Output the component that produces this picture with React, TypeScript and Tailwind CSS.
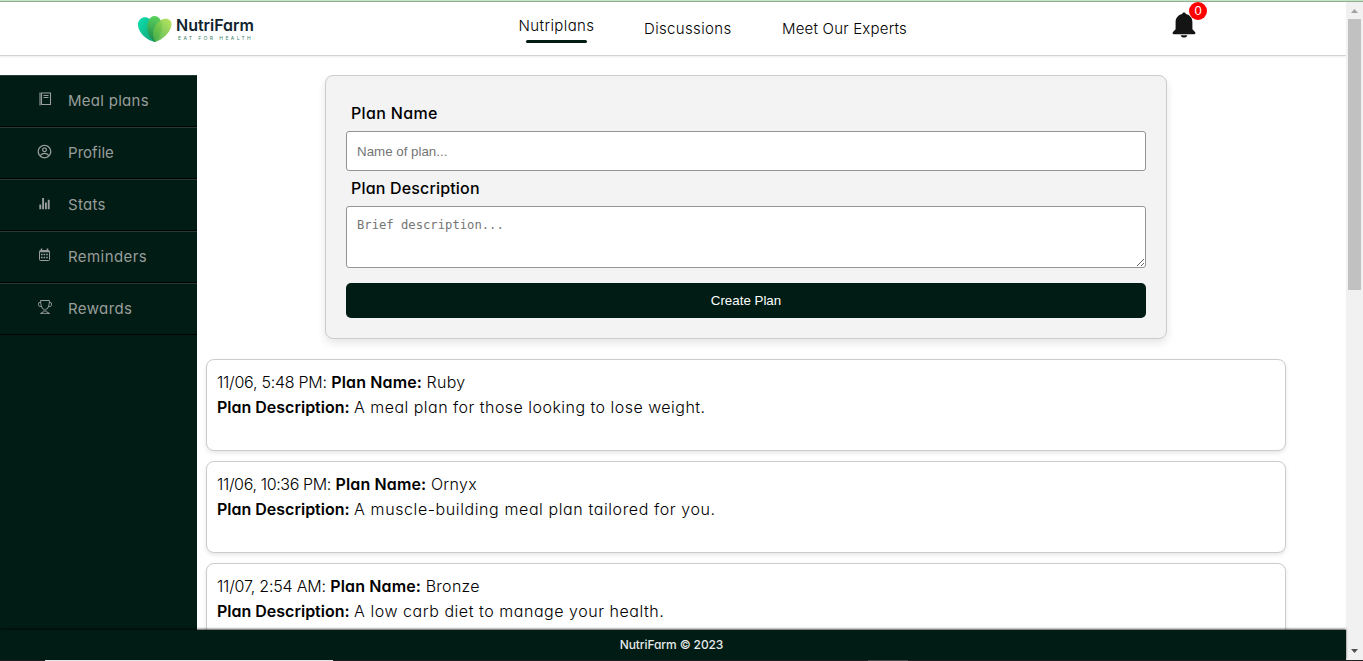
import type { ReactNode } from "react";
import { BsTrophy } from "react-icons/bs";
import { CgProfile } from "react-icons/cg";
import { IoIosStats } from "react-icons/io";

function JournalIcon() {
  return (
    <svg viewBox="0 0 14 14" className="size-3.5" fill="none" stroke="currentColor" strokeWidth="1.1">
      <path d="M2 .5v13M3.500 1h9v11.500h-9zM5.500 3.500h5M5.500 5.500h5" />
    </svg>
  );
}

function CalendarIcon() {
  return (
    <svg viewBox="0 0 14 14" className="size-3.5" fill="none" stroke="currentColor">
      <rect x="1.500" y="2.500" width="10" height="10" rx="1" />
      <path d="M1.500 3.500h10M3.500 .5v2M9.500 .5v2" strokeWidth="1.600" />
      <path d="M3 6.500h7M3 9.500h7" strokeDasharray="1.600 1" strokeWidth="1.400" />
    </svg>
  );
}

function BellIcon() {
  return (
    <svg viewBox="0 0 26 26" className="size-[26px]" fill="#141414">
      <path d="M13 .6c-1 0-1.700.6-1.900 1.500C7 3 4.600 6.200 4.600 10.400v6.800L2 20c-.8.900-.4 2.200.8 2.200h20.400c1.200 0 1.600-1.300.8-2.200l-2.600-2.800v-6.800c0-4.200-2.400-7.400-6.500-8.300C14.700 1.200 14 .6 13 .6z" />
      <path d="M9.600 23.300h6.800c-.4 1.400-1.700 2.300-3.400 2.300s-3-.9-3.400-2.300z" />
    </svg>
  );
}

function Logo() {
  return (
    <div className="flex h-[30px] w-[118px] items-start gap-[4px]">
      <svg viewBox="0 0 34 28" className="mt-[1.5px] h-7 w-[34px] shrink-0">
        <defs>
          <linearGradient id="leafLeft" x1="0" y1="0" x2="1" y2="1">
            <stop offset="0" stopColor="#0be3b0" />
            <stop offset="1" stopColor="#159b70" />
          </linearGradient>
          <linearGradient id="leafRight" x1="1" y1="0" x2="0" y2="1">
            <stop offset="0" stopColor="#b5e34d" />
            <stop offset="1" stopColor="#3fae49" />
          </linearGradient>
          <linearGradient id="leafMid" x1="0.5" y1="0" x2="0.4" y2="1">
            <stop offset="0" stopColor="#5cd35c" />
            <stop offset="1" stopColor="#17864b" />
          </linearGradient>
        </defs>
        <path d="M17 27C11 26 0 19 0 9.500C0 3 7 .5 11 3.500C16 7 18 17 17 27Z" fill="url(#leafLeft)" />
        <path d="M17 27C9 21 8 11 11 5C13 -.3 20 -.3 22.500 5C25 11 24 22 17 27Z" fill="url(#leafMid)" />
        <path d="M17 27C13 19 15 10 22 5.500C28 2 34 4 33.500 10C32.500 18 24 25 17 27Z" fill="url(#leafRight)" opacity=".9" />
      </svg>
      <div className="flex flex-col whitespace-nowrap">
        <span className="mt-[3px] font-['Inter',sans-serif] text-[16px] font-semibold leading-[19px] tracking-[-0.02px] text-[#10242f]">
          NutriFarm
        </span>
        <span className="ml-[2px] font-['Inter',sans-serif] text-[5px] leading-[6px] tracking-[2.4px] text-[#39806a]">
          EAT FOR HEALTH
        </span>
      </div>
    </div>
  );
}

const menu: { label: string; icon: ReactNode; tracking: string }[] = [
  { label: "Meal plans", icon: <JournalIcon />, tracking: "tracking-[0.28px]" },
  { label: "Profile", icon: <CgProfile className="size-[15px]" />, tracking: "tracking-[0.05px]" },
  { label: "Stats", icon: <IoIosStats className="size-[15px]" />, tracking: "tracking-[0.3px]" },
  { label: "Reminders", icon: <CalendarIcon />, tracking: "tracking-[0.42px]" },
  { label: "Rewards", icon: <BsTrophy className="size-3.5" />, tracking: "tracking-[0.4px]" },
];

const plans = [
  {
    date: "11/06, 5:48 PM:",
    dateTracking: "tracking-[-0.25px]",
    name: "Ruby",
    text: "A meal plan for those looking to lose weight.",
    textTracking: "tracking-[0.47px]",
  },
  {
    date: "11/06, 10:36 PM:",
    dateTracking: "tracking-[-0.35px]",
    name: "Ornyx",
    text: "A muscle-building meal plan tailored for you.",
    textTracking: "tracking-[0.6px]",
  },
  {
    date: "11/07, 2:54 AM:",
    dateTracking: "tracking-[-0.2px]",
    name: "Bronze",
    text: "A low carb diet to manage your health.",
    textTracking: "tracking-[0.54px]",
  },
];

function ScrollBar() {
  return (
    <div className="flex w-[17px] shrink-0 flex-col items-center bg-[#f1f1f1]">
      <svg viewBox="0 0 17 17" className="size-[17px] shrink-0">
        <path d="M5 11h7L8.500 7z" fill="#a3a3a3" />
      </svg>
      <div className="h-[271px] w-[13px] bg-[#c1c1c1]" />
      <svg viewBox="0 0 17 17" className="mt-auto size-[17px] shrink-0">
        <path d="M5 6h7l-3.500 4z" fill="#505050" />
      </svg>
    </div>
  );
}

export default function App() {
  return (
    <div className="flex h-[661px] w-[1363px] flex-col overflow-hidden bg-white font-['Inter','Open_Sans',sans-serif] text-black [font-feature-settings:'cv11']">
      <div className="h-0.5 shrink-0 border-b border-[#8fae92] bg-[#c5e5c8]" />
      <div className="flex min-h-0 flex-1">
        <div className="flex w-[1346px] flex-col">
          <header className="flex h-[54px] shrink-0 border-b border-[#d3d3d3] shadow-[0_1px_2px_rgba(0,0,0,0.08)]">
            <div className="ml-[138px] mt-[11px]">
              <Logo />
            </div>
            <nav className="ml-[262px] flex text-[15px] font-light leading-[22px]">
              <a className="mt-[13px] flex w-[77px] flex-col items-center whitespace-nowrap">
                <span className="tracking-[0.4px]">Nutriplans</span>
                <span className="mt-[3px] h-[3px] w-[61px] rounded-full bg-[#001c14]" />
              </a>
              <a className="ml-[49px] mt-4 w-[88px] whitespace-nowrap tracking-[0.35px]">Discussions</a>
              <a className="ml-[50px] mt-4 whitespace-nowrap tracking-[0.2px]">Meet Our Experts</a>
            </nav>
            <div className="relative ml-auto mr-[149px] mt-[10px] h-[26px] w-[26px]">
              <BellIcon />
              <span className="absolute -top-[10px] left-[18px] flex size-[18px] items-center justify-center rounded-full bg-[#ff0000] font-['Liberation_Sans',sans-serif] text-[13px] text-white">
                0
              </span>
            </div>
          </header>

          <div className="mt-[19px] flex min-h-0 flex-1">
            <aside className="w-[197px] shrink-0 bg-[#001c14]">
              {menu.map((m) => (
                <div key={m.label} className="flex h-[52px] border-b border-t border-b-black border-t-[#253b35] pl-[37px] text-[#999d9b]">
                  <span className="flex h-[46px] w-[15px] items-center justify-center">{m.icon}</span>
                  <span className={`ml-4 text-[15px] font-normal leading-[50px] ${m.tracking}`}>{m.label}</span>
                </div>
              ))}
            </aside>

            <main className="flex min-w-0 flex-1 flex-col overflow-hidden">
              <form className="ml-32 flex h-[264px] w-[842px] shrink-0 flex-col rounded-lg border border-[#ccc] bg-[#f3f3f3] px-5 pt-[25px] shadow-[0_4px_8px_rgba(0,0,0,0.1)]">
                <label className="ml-[5px] h-[30px] text-[16px] font-medium leading-6 tracking-[0.35px]">Plan Name</label>
                <input
                  className="h-10 w-full rounded-[3px] border border-[#949494] bg-white px-2.5 font-['Liberation_Sans',sans-serif] text-[13.333px] placeholder:text-[#757575]"
                  placeholder="Name of plan..."
                />
                <label className="ml-[5px] mt-[5px] h-[30px] text-[16px] font-medium leading-6 tracking-[0.17px]">Plan Description</label>
                <textarea
                  className="block h-[62px] w-full shrink-0 rounded-[3px] border border-[#949494] bg-white p-2.5 font-['DejaVu_Sans_Mono',monospace] text-[12.2px] leading-4 placeholder:text-[#757575]"
                  placeholder="Brief description..."
                />
                <button
                  type="button"
                  className="mt-[15px] h-[35px] w-full shrink-0 rounded-[5px] bg-[#001c14] font-['Liberation_Sans',sans-serif] text-[13.333px] text-white"
                >
                  Create Plan
                </button>
              </form>

              <div className="ml-[9px] mt-5 flex w-[1080px] flex-col gap-2.5">
                {plans.map((p) => (
                  <article
                    key={p.name}
                    className="h-[92px] shrink-0 whitespace-nowrap rounded-lg border border-[#ccc] bg-white px-2.5 pt-2.5 text-[16px] font-light leading-[25px] shadow-[0_2px_4px_rgba(0,0,0,0.1)]"
                  >
                    <p>
                      <span className={p.dateTracking}>{p.date}</span>{" "}
                      <b className="font-semibold tracking-[0.14px]">Plan Name:</b>{" "}
                      <span className="tracking-[0.3px]">{p.name}</span>
                    </p>
                    <p>
                      <b className="font-semibold tracking-[0px]">Plan Description:</b>{" "}
                      <span className={p.textTracking}>{p.text}</span>
                    </p>
                  </article>
                ))}
              </div>
            </main>
          </div>

          <footer className="relative h-[30px] shrink-0 bg-[#001c14] pr-[3px] text-center text-[12px] font-medium leading-[30px] text-[#e6e9e8] shadow-[0_-1px_2px_rgba(0,0,0,0.7)]">
            <span className="tracking-[-0.1px]">NutriFarm © 2023</span>
          </footer>
        </div>
        <ScrollBar />
      </div>
      <div className="flex h-px shrink-0 bg-[#202020]">
        <div className="ml-[45px] h-px w-72 bg-[#f2f2f2]" />
        <div className="ml-[535px] h-px w-10 bg-[#505050]" />
      </div>
    </div>
  );
}
